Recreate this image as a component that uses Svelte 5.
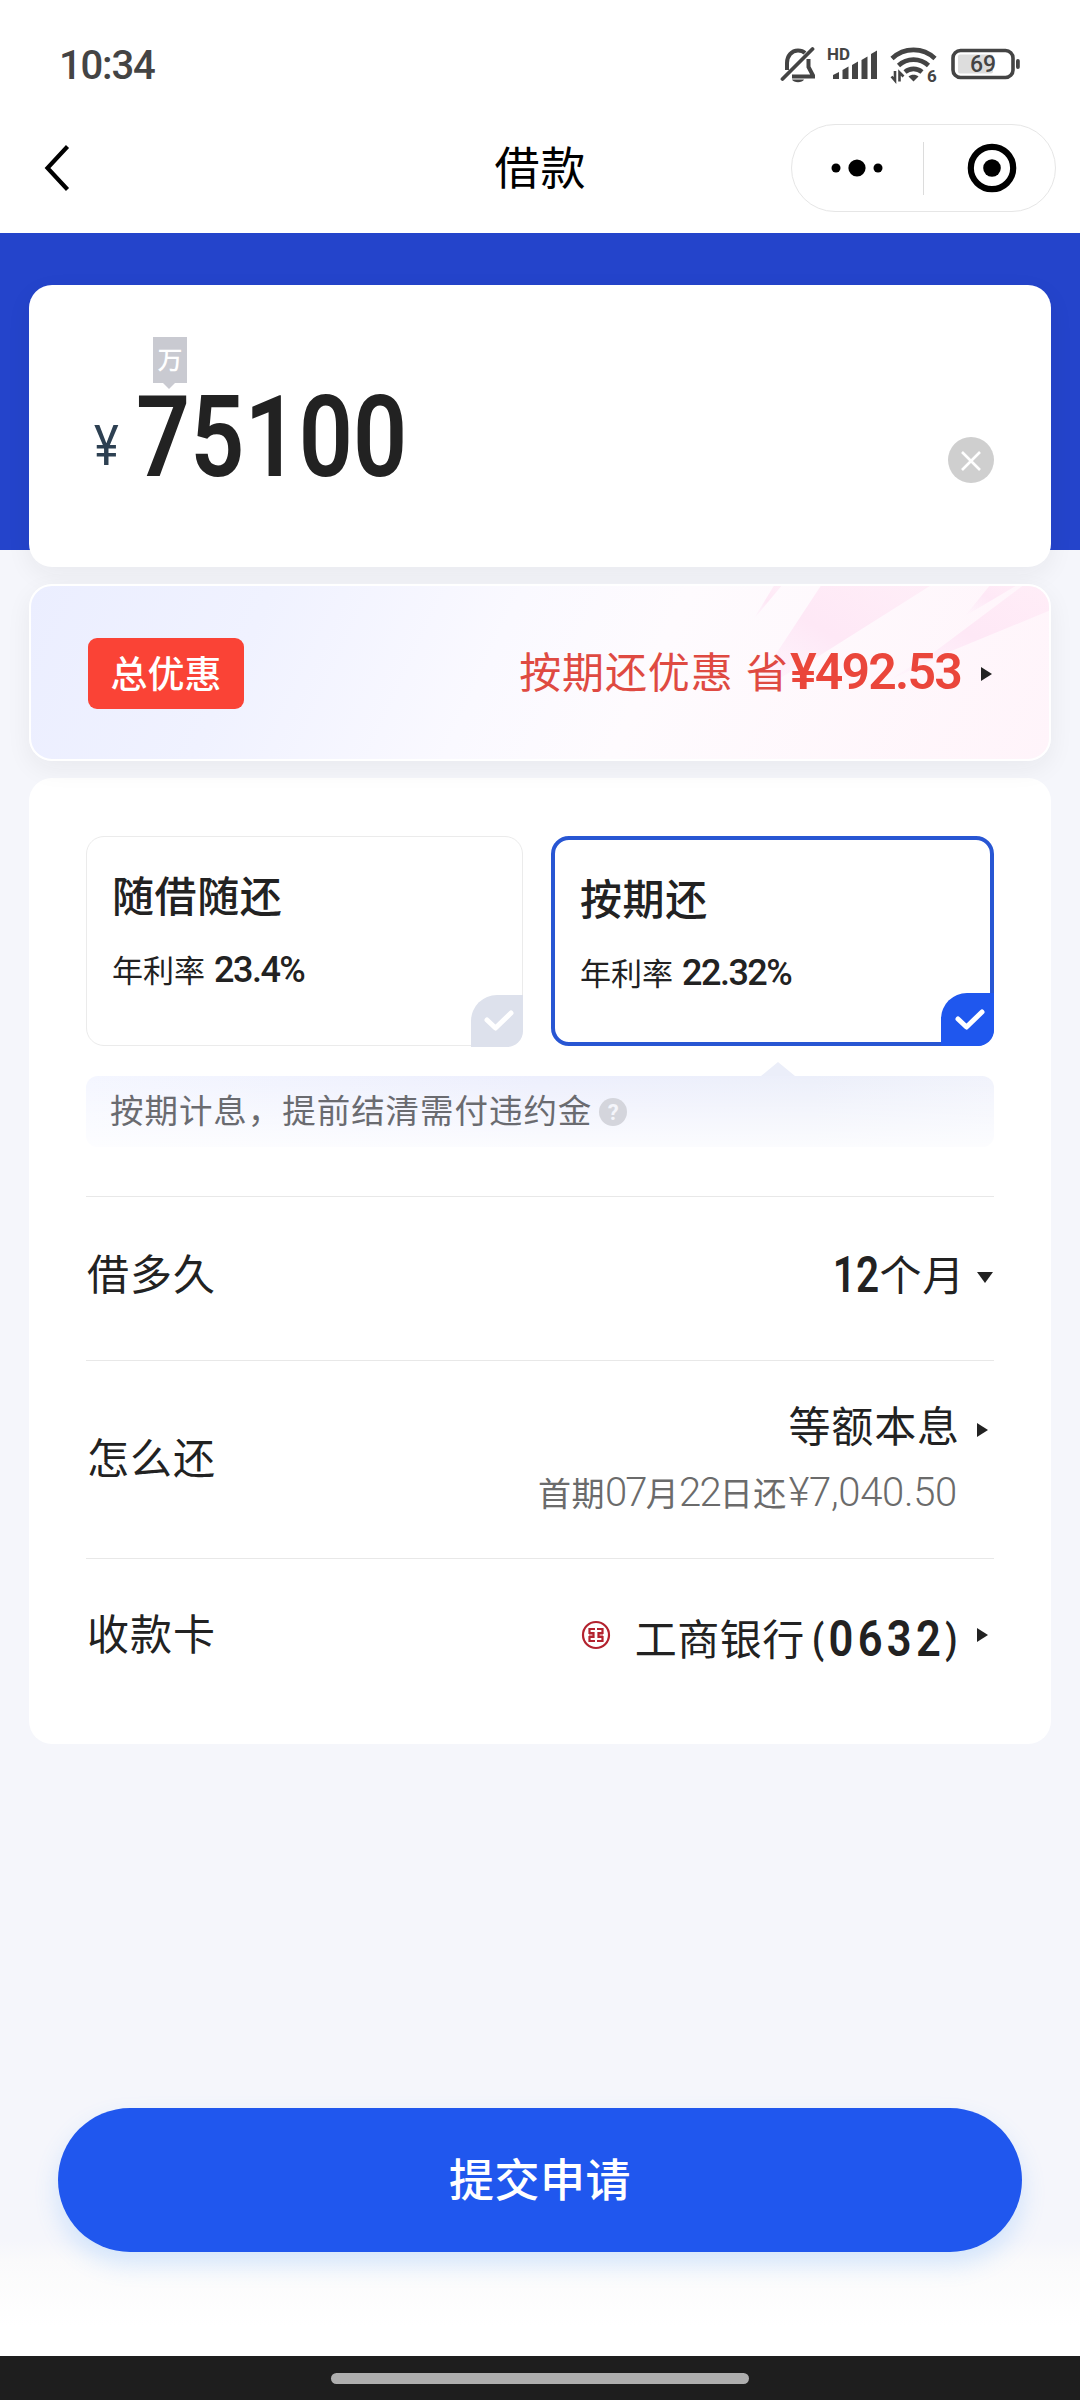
<script lang="ts">
const plans = [
  { name: "随借随还", rate: "23.4%", active: false },
  { name: "按期还", rate: "22.32%", active: true },
];
const amount = "75100";
</script>

<div class="page">
  <header>
    <div class="status">
      <span class="time">10:34</span>
      <div class="status-icons">
        <svg class="bell" width="36" height="40" viewBox="0 0 36 40" fill="none" stroke="#444" stroke-width="4">
          <path d="M7 25V18C7 11 11.500 5.500 18 5.500C21 5.500 23.500 6.500 25 8" />
          <path d="M28.500 14V22L33 30.500V31.500H12" />
          <path d="M2.500 34L32.500 4" stroke-linecap="round" stroke-width="3.800" />
          <path d="M12 34.500H24C22.500 38.200 13.500 38.200 12 34.500Z" fill="#444" stroke="none" />
        </svg>
        <svg class="signal" width="52" height="40" viewBox="0 0 52 40" fill="#444">
          <text x="0" y="14.500" font-size="16" font-weight="700" textLength="23" lengthAdjust="spacingAndGlyphs">HD</text>
          <path d="M6 34V30L12 27V34Z" />
          <path d="M15.500 34V25L21.500 21.500V34Z" />
          <path d="M25 34V20L31 16.500V34Z" />
          <path d="M34.500 34V15L40.500 11.500V34Z" />
          <path d="M44 34V9L50 5.500V34Z" />
        </svg>
        <svg class="wifi" width="48" height="40" viewBox="0 0 48 40" fill="none" stroke="#444" stroke-width="4.600">
          <path d="M2 13.500A31 31 0 0 1 45 13.500" />
          <path d="M8.500 20.500A22 22 0 0 1 38.500 20.500" />
          <path d="M15 27A13 13 0 0 1 32 27" />
          <path d="M18.500 31.500C21 29 26 29 28.500 31.500L23.500 36.500Z" fill="#444" stroke="none" />
          <path d="M1.500 31.500L5 35.500V26M9.500 36.500V27.500L13.500 31.500" stroke-width="2.600" />
          <text x="37" y="36.500" font-size="17" font-weight="700" fill="#444" stroke="none">6</text>
        </svg>
        <svg class="battery" width="70" height="40" viewBox="0 0 70 40">
          <rect x="7" y="9.500" width="35" height="19" rx="2" fill="#ddd" />
          <rect x="2" y="5.500" width="60" height="27" rx="7.500" fill="none" stroke="#444" stroke-width="3.600" />
          <rect x="65" y="14" width="3.800" height="10" rx="1.900" fill="#444" />
          <text x="32" y="27" font-size="23" font-weight="500" fill="#444" text-anchor="middle">69</text>
        </svg>
      </div>
    </div>
    <nav>
      <svg class="back" width="28" height="50" viewBox="0 0 28 50" fill="none" stroke="#000" stroke-width="4.200">
        <path d="M23.500 3.500L3.500 25L23.500 46.500" />
      </svg>
      <h1>借款</h1>
      <div class="capsule">
        <svg width="52" height="20" viewBox="0 0 52 20">
          <circle cx="5" cy="10" r="4.500" />
          <circle cx="26" cy="10" r="8.600" />
          <circle cx="47" cy="10" r="4.500" />
        </svg>
        <span class="bar"></span>
        <svg width="50" height="50" viewBox="0 0 50 50">
          <circle cx="25" cy="25" r="21.200" fill="none" stroke="#000" stroke-width="6.200" />
          <circle cx="25" cy="25" r="8.800" />
        </svg>
      </div>
    </nav>
  </header>

  <main>
    <section class="card amount-card">
      <span class="unit">万</span>
      <span class="yen">¥</span>
      <span class="amount">{amount}</span>
      <svg class="clear" width="46" height="46" viewBox="0 0 46 46">
        <circle cx="23" cy="23" r="23" fill="#cfcfcf" />
        <path d="M14 15L32 33M32 15L14 33" stroke="#fff" stroke-width="2.600" />
      </svg>
    </section>

    <section class="card promo">
      <svg class="rays" width="1018" height="173" viewBox="2 2 1018 173">
        <defs>
          <linearGradient id="ray" x1="1" y1="0" x2="0" y2="1">
            <stop offset="0" stop-color="#ffe8f5" stop-opacity="0.6" />
            <stop offset="0.5" stop-color="#fee8f6" />
            <stop offset="1" stop-color="#fde8f8" stop-opacity="0" />
          </linearGradient>
        </defs>
        <path d="M793 0H904L790 72L717 113L745 73Z" fill="url(#ray)" />
        <path d="M996 0H1022V26L915 70L855 99L904 69Z" fill="url(#ray)" />
        <path d="M746 0H754L724 36Z" fill="url(#ray)" />
        <path d="M962 0H990L936 32Z" fill="url(#ray)" />
      </svg>
      <span class="tag">总优惠</span>
      <p class="saving">按期还优惠 省</p>
      <b class="money">¥492.53</b>
      <i class="arrow"></i>
    </section>

    <section class="card detail">
      <div class="plans">
        {#each plans as plan}
          <div class="plan" class:active={plan.active}>
            <h2>{plan.name}</h2>
            <p>年利率 <b>{plan.rate}</b></p>
            <span class="check">
              <svg width="30" height="24" viewBox="0 0 30 24" fill="none" stroke="#fff" stroke-width="5">
                <path d="M3 11L11.500 19L27 4" stroke-linecap="round" stroke-linejoin="round" />
              </svg>
            </span>
          </div>
        {/each}
      </div>

      <div class="tip">
        <span>按期计息，提前结清需付违约金</span>
        <i class="help">?</i>
      </div>

      <div class="row term">
        <span class="label">借多久</span>
        <b>12</b>
        <span class="value">个月</span>
        <i class="arrow down"></i>
      </div>

      <div class="row method">
        <span class="label">怎么还</span>
        <div class="stack">
          <span class="value">等额本息</span>
          <span class="sub">首期<em>07</em>月<em>22</em>日还<em class="money">¥7,040.50</em></span>
        </div>
        <i class="arrow"></i>
      </div>

      <div class="row bank">
        <span class="label">收款卡</span>
        <svg class="icbc" width="30" height="30" viewBox="0 0 30 30" fill="none" stroke="#b3222e" stroke-width="2.200">
          <circle cx="15" cy="15" r="13" />
          <path d="M14 9H8.500V13H12.500V17H8.500V21H14M16 9H21.500V13H17.500V17H21.500V21H16" />
          <path d="M8 15H12M18 15H22" stroke-width="1.200" />
        </svg>
        <span class="value">工商银行</span>
        <b><span class="paren">(</span>0632<span class="paren">)</span></b>
        <i class="arrow"></i>
      </div>
    </section>
  </main>

  <footer>
    <button type="button">提交申请</button>
  </footer>
  <div class="home-bar"><span></span></div>
</div>

<style>
:global(body) {
  margin: 0;
}

.page {
  display: flex;
  flex-direction: column;
  width: 1080px;
  height: 2400px;
  overflow: hidden;
  background: #f5f6fb;
  color: #222;
  font-family: "Noto Sans CJK SC", sans-serif;
}

h1,
h2,
p {
  margin: 0;
  font-weight: 400;
}

i,
em {
  font-style: normal;
}

svg {
  display: block;
  flex: none;
}

b,
em,
.amount,
.yen,
.time,
svg text {
  font-family: Roboto, sans-serif;
}

b {
  font-weight: 500;
}

header {
  height: 233px;
  background: #fff;
}

/* Status bar */
.status {
  display: flex;
  align-items: center;
  justify-content: space-between;
  box-sizing: border-box;
  height: 124px;
  padding: 6px 59px 0;
}

.time {
  font-size: 40px;
  font-weight: 500;
  letter-spacing: -1.2px;
  color: #444;
}

.status-icons {
  display: flex;
}

.signal {
  margin-left: 11px;
}

.wifi {
  margin-left: 11px;
}

.battery {
  margin-left: 13px;
}

/* Navigation */
nav {
  display: grid;
  grid-template-columns: 1fr auto 1fr;
  align-items: center;
  height: 88px;
  padding: 0 24px 0 44px;
}

h1 {
  margin-left: -19px;
  padding-bottom: 4px;
  font-size: 45px;
  line-height: 70px;
  letter-spacing: 1px;
  color: #000;
}

.capsule {
  display: flex;
  align-items: center;
  justify-self: end;
  box-sizing: border-box;
  width: 265px;
  height: 88px;
  padding: 0 38px 0 39px;
  justify-content: space-between;
  border: 1px solid #e6e6e6;
  border-radius: 44px;
}

.bar {
  width: 1px;
  height: 53px;
  margin-right: 4px;
  background: #dcdcdc;
}

main {
  display: flex;
  flex-direction: column;
  gap: 17px;
  padding: 52px 29px 0;
  background: linear-gradient(#2444cb 317px, transparent 317px);
}

.card {
  box-sizing: border-box;
  border-radius: 23px;
  background: #fff;
  box-shadow: 0 8px 26px rgba(30, 30, 40, 0.06);
}

/* Loan amount */
.amount-card {
  position: relative;
  display: flex;
  align-items: center;
  height: 282px;
  padding: 0 57px 0 65px;
}

.unit {
  position: absolute;
  top: 52px;
  left: 124px;
  width: 34px;
  height: 46px;
  background: #c9cad1;
  color: #fff;
  font-size: 25px;
  font-weight: 500;
  line-height: 43px;
  text-align: center;
}

.unit::after {
  content: "";
  position: absolute;
  top: 46px;
  left: 10px;
  border: 6px solid transparent;
  border-top-color: #c9cad1;
  border-bottom: 0;
}

.yen {
  width: 42px;
  margin-top: 39px;
  font-size: 56px;
  line-height: 60px;
  color: #2d4052;
  transform: scaleX(0.84);
  transform-origin: left;
}

.amount {
  margin-top: 23px;
  font-size: 113px;
  font-weight: 600;
  line-height: 120px;
  transform: scaleX(0.84);
  transform-origin: left;
}

.clear {
  margin: 68px 0 0 auto;
}

/* Discount banner */
.promo {
  position: relative;
  display: flex;
  align-items: center;
  height: 177px;
  padding: 2px 57px 0;
  border: 2px solid #fff;
  background: linear-gradient(115deg, #ebeeff 0%, #f0f2ff 22%, #faf9ff 45%, #fefbfe 60%, #fff4fa 100%);
}

.rays {
  position: absolute;
  top: 0;
  left: 0;
  border-radius: 21px;
}

.tag {
  position: relative;
  width: 156px;
  height: 71px;
  border-radius: 9px;
  background: #fa4336;
  color: #fff;
  font-size: 37px;
  font-weight: 500;
  line-height: 69px;
  text-align: center;
}

.saving {
  position: relative;
  margin: 0 1px 8px auto;
  font-size: 42px;
  line-height: 60px;
  letter-spacing: 0.9px;
  word-spacing: 2px;
  color: #df4a42;
}

.promo .money {
  position: relative;
  margin-bottom: 3px;
  font-size: 50px;
  font-weight: 600;
  line-height: 50px;
  letter-spacing: -1.8px;
  color: #ea463b;
}

.arrow {
  position: relative;
  border: 7.500px solid transparent;
  border-left: 11px solid #222;
  border-right: 0;
}

.arrow.down {
  border: 8px solid transparent;
  border-top: 11px solid #222;
  border-bottom: 0;
}

.promo .arrow {
  margin-left: 20px;
}

/* Repayment plans */
.detail {
  height: 966px;
  padding: 58px 57px 0;
  box-shadow: none;
}

.plans {
  display: grid;
  grid-template-columns: 437px 443px;
  justify-content: space-between;
}

.plan {
  position: relative;
  box-sizing: border-box;
  height: 210px;
  padding: 28px 25px 0;
  border: 1px solid #ebebeb;
  border-radius: 18px;
}

.plan.active {
  border: 4px solid #2856d3;
}

h2 {
  font-size: 42px;
  font-weight: 500;
  line-height: 58px;
  letter-spacing: 0.6px;
}

.plan p {
  margin-top: 23px;
  font-size: 31px;
  line-height: 46px;
}

.plan b {
  margin-left: 2px;
  font-size: 36px;
  line-height: 36px;
  letter-spacing: -1.500px;
}

.check {
  position: absolute;
  right: -1px;
  bottom: -2px;
  display: flex;
  align-items: center;
  justify-content: center;
  width: 52px;
  height: 52px;
  padding-left: 4px;
  box-sizing: border-box;
  border-radius: 26px 0 16px 0;
  background: #dde1ec;
}

.active .check {
  right: -4px;
  bottom: -4px;
  width: 53px;
  height: 53px;
  background: #1f57ee;
}

.tip {
  position: relative;
  display: flex;
  align-items: center;
  gap: 7px;
  height: 71px;
  margin-top: 30px;
  padding-left: 24px;
  border-radius: 12px;
  background: linear-gradient(rgba(255, 255, 255, 0), rgba(255, 255, 255, 0.8)), linear-gradient(90deg, #f4f6ff, #edeffd 50%, #eceffa 80%, #f1f3fc);
  color: #6a6b70;
  font-size: 33.500px;
  letter-spacing: 0.950px;
}

.tip span {
  padding-bottom: 7px;
}

.tip::before {
  content: "";
  position: absolute;
  top: -14px;
  left: 675px;
  border: 17px solid transparent;
  border-top: 0;
  border-bottom: 14px solid #ebeef9;
}

.help {
  width: 28px;
  height: 28px;
  border-radius: 50%;
  background: #d4d5dc;
  color: #f4f5fb;
  font: 700 22px/29px Roboto, sans-serif;
  letter-spacing: 0;
  text-align: center;
}

/* Detail rows */
.row {
  display: flex;
  align-items: center;
  box-sizing: border-box;
  border-top: 1px solid #e8e8e8;
  font-size: 42px;
  line-height: 60px;
}

.label {
  margin-right: auto;
  padding: 0 0 7px 1px;
  letter-spacing: 1px;
}

.row b {
  font-size: 50px;
  line-height: 50px;
}

.term {
  height: 164px;
  margin-top: 49px;
  padding-bottom: 7px;
}

.term .arrow {
  margin: 5px 1px 0 12px;
}

.term .value {
  padding-bottom: 5px;
  letter-spacing: 0.8px;
}

.term b {
  font-weight: 600;
  transform: scaleX(0.81);
  transform-origin: right;
}

.method {
  height: 198px;
}

.stack {
  display: flex;
  flex-direction: column;
  align-items: flex-end;
}

.stack .value {
  padding-bottom: 4px;
  line-height: 62px;
  letter-spacing: 0.9px;
  margin-right: -3px;
}

.sub {
  padding-bottom: 2px;
  color: #6b6b6b;
  font-size: 33px;
  line-height: 66px;
  letter-spacing: 0.4px;
}

.sub em {
  font-size: 40px;
  line-height: 40px;
  font-weight: 350;
  letter-spacing: -1.800px;
}

.sub .money {
  margin-left: 2px;
  letter-spacing: -0.300px;
}

.method .arrow {
  margin: -60px 6px 0 20px;
}

.bank {
  height: 160px;
}

.bank .label {
  padding-bottom: 14px;
}

.icbc {
  margin: -7px 24px 0 0;
}

.bank .value {
  padding-bottom: 3px;
  letter-spacing: 0.500px;
}

.bank b {
  margin: 2px -7px 0 7px;
  font-weight: 600;
  letter-spacing: 5px;
  transform: scaleX(0.87);
  transform-origin: left;
}

.paren {
  font-size: 40px;
  vertical-align: 3px;
}

.bank .arrow {
  margin: -8px 6px 0 0;
}

/* Submit */
footer {
  box-sizing: border-box;
  height: 260px;
  margin-top: auto;
  padding: 12px 58px 0;
  background: linear-gradient(#f5f6fb 145px, #fafafb 165px, #fff 230px);
}

button {
  display: block;
  width: 964px;
  height: 144px;
  padding: 0 0 5px;
  border: 0;
  border-radius: 72px;
  background: #2057ee;
  box-shadow: 0 12px 24px rgba(60, 150, 255, 0.2);
  color: #fff;
  font: 500 45px/70px "Noto Sans CJK SC", sans-serif;
  letter-spacing: 0.5px;
}

.home-bar {
  display: flex;
  justify-content: center;
  flex: none;
  box-sizing: border-box;
  height: 44px;
  padding-top: 17px;
  background: #1e1e1e;
}

.home-bar span {
  width: 418px;
  height: 11px;
  border-radius: 6px;
  background: #aeaeae;
}
</style>
